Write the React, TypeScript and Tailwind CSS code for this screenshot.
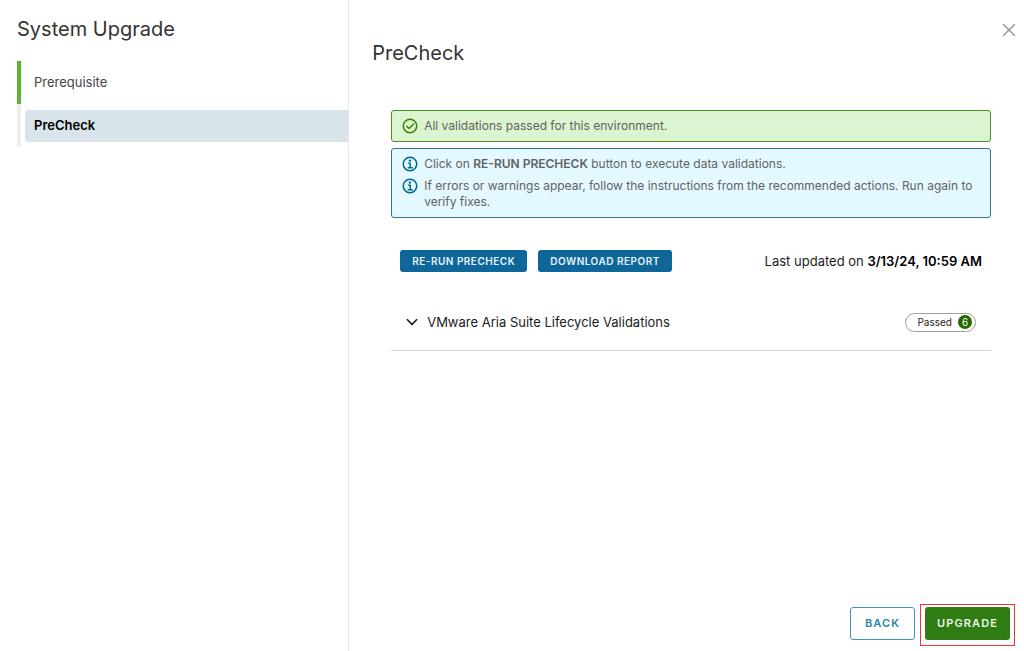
import React, { useState } from "react";

function CheckCircle() {
  return (
    <svg viewBox="0 0 36 36" className="size-4 shrink-0 text-[#3c8500]" fill="none" stroke="currentColor" aria-hidden="true">
      <circle cx="18" cy="18" r="15.2" strokeWidth="3.4" />
      <path d="M10.5 18.5 L15.8 23.5 L26 13.5" strokeWidth="3.2" strokeLinecap="round" strokeLinejoin="round" />
    </svg>
  );
}

function InfoCircle() {
  return (
    <svg viewBox="0 0 36 36" className="size-4 shrink-0 text-[#00648f]" fill="none" stroke="currentColor" aria-hidden="true">
      <circle cx="18" cy="18" r="15.2" strokeWidth="3.4" />
      <circle cx="17.8" cy="10.4" r="2.7" fill="currentColor" stroke="none" />
      <path d="M14.5 16 H18.6 V26 M14 26.5 H23" strokeWidth="3.2" strokeLinecap="round" strokeLinejoin="round" />
    </svg>
  );
}

function Notice({ icon, children }: { icon: React.ReactNode; children: React.ReactNode }) {
  return (
    <div className="flex gap-1.5">
      {icon}
      <p className="leading-4">{children}</p>
    </div>
  );
}

export default function App() {
  const [open, setOpen] = useState(false);

  return (
    <div className="flex min-h-screen bg-white font-['Inter',sans-serif] text-[13px] text-[#1b1b1b]">
      <aside className="w-[34%] shrink-0 pt-[15px] pl-[17px]">
        <h1 className="text-xl leading-7 font-normal text-[#333]">System Upgrade</h1>
        <nav aria-label="Steps" className="mt-[18px]">
          <ol>
            <li className="flex h-[43px] items-center border-l-4 border-[#5eb131] pl-1">
              <button type="button" className="h-8 w-full rounded-l-[3px] pl-[9px] text-left text-[#454545]">
                Prerequisite
              </button>
            </li>
            <li className="flex h-[43px] items-center border-l-4 border-[#eeeeee] pl-1">
              <button type="button" aria-current="step" className="h-8 w-full rounded-l-[3px] bg-[#d9e4ea] pl-[9px] text-left font-semibold text-black">
                PreCheck
              </button>
            </li>
          </ol>
        </nav>
      </aside>

      <main className="flex min-w-0 flex-1 flex-col border-l border-[#e8e8e8] pl-[23px]">
        <header className="flex h-[74px] justify-between pr-2">
          <h2 className="pt-[39px] text-xl leading-7 font-normal text-[#333]">PreCheck</h2>
          <button type="button" aria-label="Close" className="mt-[23px] size-3.5 text-[#8c8c8c]">
            <svg viewBox="0 0 14 14" className="size-3.5" fill="none" stroke="currentColor" strokeWidth="1.2" strokeLinecap="round" aria-hidden="true">
              <path d="M1.5 1.5 L12.5 12.5 M12.5 1.5 L1.5 12.5" />
            </svg>
          </button>
        </header>

        <div className="flex-1 pt-9 pr-[33px] pl-[19px]">
          <div className="flex flex-col gap-1.5 text-xs text-[#626262]">
            <div role="status" className="rounded-[3px] border border-[#4d8f2c] bg-[#dbf5d0] px-2.5 py-[7px]">
              <Notice icon={<CheckCircle />}>All validations passed for this environment.</Notice>
            </div>
            <div className="flex flex-col gap-1.5 rounded-[3px] border border-[#2f7699] bg-[#e3f9ff] px-2.5 py-[7px]">
              <Notice icon={<InfoCircle />}>
                Click on <strong className="font-semibold">RE-RUN PRECHECK</strong> button to execute data validations.
              </Notice>
              <Notice icon={<InfoCircle />}>
                If errors or warnings appear, follow the instructions from the recommended actions. Run again to verify fixes.
              </Notice>
            </div>
          </div>

          <div className="mt-8 flex items-center gap-[11px] px-[9px]">
            <button type="button" className="h-[22px] rounded-[3px] bg-[#0f6699] px-3 text-[10px] font-semibold tracking-wider text-[#e6f3fa]">
              RE-RUN PRECHECK
            </button>
            <button type="button" className="h-[22px] rounded-[3px] bg-[#0f6699] px-3 text-[10px] font-semibold tracking-wider text-[#e6f3fa]">
              DOWNLOAD REPORT
            </button>
            <p className="ml-auto leading-[22px]">
              Last updated on <strong className="font-semibold text-black">3/13/24, 10:59 AM</strong>
            </p>
          </div>

          <section className="mt-[22px] border-b border-[#d4d4d4]">
            <button
              type="button"
              aria-expanded={open}
              onClick={() => setOpen(!open)}
              className="flex h-14 w-full items-center px-[15px] text-left"
            >
              <svg viewBox="0 0 12 12" className="size-3" fill="none" stroke="currentColor" strokeWidth="1.6" strokeLinecap="round" strokeLinejoin="round" aria-hidden="true">
                <path d="M1.4 3.7 L6 8.4 L10.6 3.7" />
              </svg>
              <span className="ml-[9px] leading-[22px]">VMware Aria Suite Lifecycle Validations</span>
              <span className="ml-auto flex h-[19px] items-center gap-1.5 rounded-full border border-[#a0a0a0] pr-[3px] pl-[11px] text-[10px] leading-none">
                Passed
                <span className="flex size-3.5 items-center justify-center rounded-full bg-[#266900] leading-none text-white">6</span>
              </span>
            </button>
          </section>
        </div>

        <footer className="flex items-start justify-end gap-[5px] pr-[9px] pb-[5px]">
          <button type="button" className="mt-[3px] h-[33px] rounded-[3px] border border-[#3f93bd] bg-white px-3.5 text-[11px] font-semibold tracking-widest text-[#2b83b0]">
            BACK
          </button>
          <div className="border border-[#f0343c] px-1 pt-0.5 pb-[5px]">
            <button type="button" className="h-[33px] rounded-[3px] bg-[#2f7d12] px-3 text-[11px] font-semibold tracking-widest text-[#eaf5e4]">
              UPGRADE
            </button>
          </div>
        </footer>
      </main>
    </div>
  );
}
